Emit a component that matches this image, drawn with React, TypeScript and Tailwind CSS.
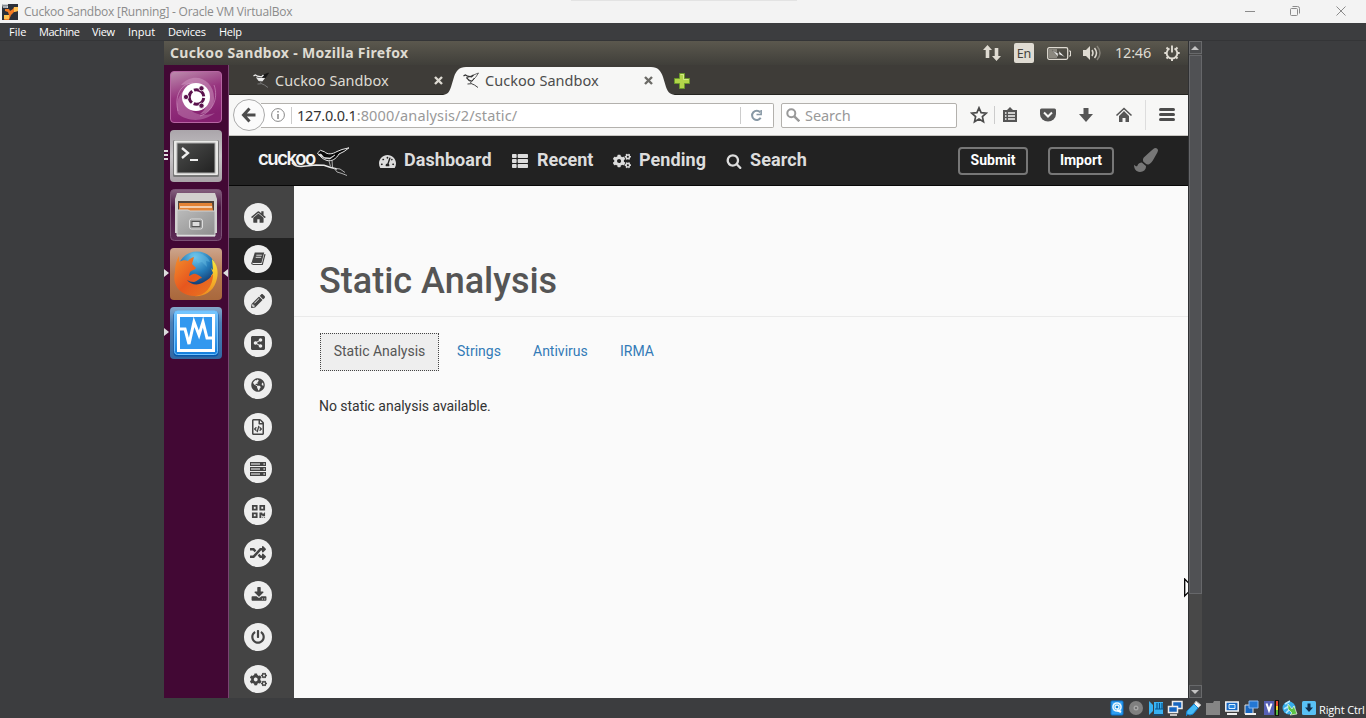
import React from 'react';
import {
  FaCogs, FaGlobeAmericas, FaPaintBrush, FaPencilAlt, FaPowerOff, FaQrcode,
  FaRandom, FaRegFileCode, FaShareAltSquare, FaTachometerAlt, FaThList,
} from 'react-icons/fa';

const HOME = 'M1408 992v480q0 26-19 45t-45 19h-384v-384h-256v384h-384q-26 0-45-19t-19-45v-480q0-1 .5-3t.5-3l575-474 575 474q1 2 1 6zm223-69l-62 74q-8 9-21 11h-3q-13 0-21-7l-692-577-692 577q-12 8-24 7-13-2-21-11l-62-74q-8-10-7-23.5t11-21.5l719-599q32-26 76-26t76 26l244 204v-195q0-14 9-23t23-9h192q14 0 23 9t9 23v408l219 182q10 8 11 21.5t-7 23.5z';
const SEARCH = 'M1216 832q0-185-131.5-316.5t-316.5-131.5-316.5 131.5-131.5 316.5 131.5 316.5 316.5 131.5 316.5-131.5 131.5-316.5zm512 832q0 52-38 90t-90 38q-54 0-90-38l-343-342q-179 124-399 124-143 0-273.5-55.5t-225-150-150-225-55.5-273.5 55.5-273.5 150-225 225-150 273.5-55.5 273.5 55.5 225 150 150 225 55.5 273.5q0 220-124 399l343 343q37 37 37 90z';
const DOWNLOAD = 'M1344 1344q0-26-19-45t-45-19-45 19-19 45 19 45 45 19 45-19 19-45zm256 0q0-26-19-45t-45-19-45 19-19 45 19 45 45 19 45-19 19-45zm128-224v320q0 40-28 68t-68 28h-1472q-40 0-68-28t-28-68v-320q0-40 28-68t68-28h465l135 136q58 56 136 56t136-56l136-136h464q40 0 68 28t28 68zm-325-569q17 41-14 70l-448 448q-18 19-45 19t-45-19l-448-448q-31-29-14-70 17-39 59-39h256v-448q0-26 19-45t45-19h256q26 0 45 19t19 45v448h256q42 0 59 39z';

function Glyph({ d, className }: { d: string; className?: string }) {
  return <svg viewBox="0 0 1792 1792" fill="currentColor" className={className}><path d={d} /></svg>;
}

function Bird({ light }: { light?: boolean }) {
  const c = light ? '#333' : '#eee';
  return (
    <svg viewBox="0 0 16 16" className="h-4 w-4 shrink-0" fill="none">
      <path d="m3.500 6 5 3.500 4-4L15.500 1l-5 2Z" fill={light ? '#f7f7f6' : '#161616'} stroke={light ? '#444' : '#161616'} strokeWidth=".8" />
      <path d="M.5 3.800 2.500 3l2 1.200 4 .6L10.500 3" stroke={c} strokeWidth="1.300" />
      <path d="m3.500 5.500 2.500 3 3 .5 2.500-3" fill={light ? 'none' : '#eee'} stroke={c} strokeWidth="1.100" />
      <path d="m7 9.500 1.500 2M4.500 12l4-.3 3 1.300 3.500 2.500" stroke={light ? '#444' : '#777'} strokeWidth="1" />
    </svg>
  );
}

function CuckooLogo() {
  return (
    <div className="relative flex h-[49px] w-[92px] shrink-0 items-start pt-[10px]">
      <span className="font-['Inter',sans-serif] text-[18.500px] leading-[24px] font-semibold tracking-[-1.450px] text-[#f4f4f4]">cuckoo</span>
      <svg viewBox="0 0 92 32" className="absolute top-[10px] left-0 h-8 w-[92px]" fill="none" stroke="#e8e8e8">
        <path d="M34 16.500c2 3 5 4 9 4l15-1.500 8 .300 6 2 7 1.700" strokeWidth="1.500" />
        <path d="M59.500 7l3-2.700 4 1.500c3 3 8 2.500 12.500-.300L84 3.500l7-1.700-5 3.700-5 2.500c-3 5-7 7.500-12 6.500-4-1-6.500-4-8.500-6Z" fill="#080808" strokeWidth="1" />
        <path d="m60 8.500 3-.5 3 3.500 6 .5 5-3-5 4-5-.5Z" fill="#e8e8e8" strokeWidth=".6" />
        <path d="m71 15 1.500 5.500M74 14l.5 7M78 22.500l4 .5 5 3.500M76 22l3 4 5 1.500 5 2" strokeWidth=".9" stroke="#bbb" />
      </svg>
    </div>
  );
}

function BookIcon() {
  return (
    <svg viewBox="0 0 16 16" className="h-4 w-4">
      <path d="M4.800 1.500h9.400L11.400 12H3.200Q1.500 12 2 10.300Z" fill="#444" />
      <path d="M15 3.200 12.300 13.500H3.200Q1.600 13.400 1.500 11.500" fill="none" stroke="#444" strokeWidth="1.200" />
      <path d="M6.300 4.200h5.500M5.700 6.300h5.500" stroke="#eee" strokeWidth=".9" />
    </svg>
  );
}

function ServerIcon() {
  return (
    <svg viewBox="0 0 16 14" className="h-[14px] w-4">
      {[0, 5, 10].map((y) => (
        <g key={y}>
          <rect y={y} width="16" height="4" fill="#444" />
          <rect x="1" y={y + 1.300} width="9" height="1.400" fill="#c4c4c4" />
          <rect x="13.500" y={y + 1.300} width="1.300" height="1.400" fill="#eee" />
        </g>
      ))}
    </svg>
  );
}

const sidebar: React.ReactNode[] = [
  <Glyph d={HOME} className="ml-px h-4 w-4" />,
  <BookIcon />,
  <FaPencilAlt className="h-[14px] w-[14px]" />,
  <FaShareAltSquare className="h-4 w-4" />,
  <FaGlobeAmericas className="h-[14px] w-[14px]" />,
  <FaRegFileCode className="h-4 w-4" />,
  <ServerIcon />,
  <FaQrcode className="h-[15px] w-[15px]" />,
  <FaRandom className="h-4 w-4" />,
  <Glyph d={DOWNLOAD} className="ml-px h-4 w-4" />,
  <FaPowerOff className="h-[14px] w-[14px]" />,
  <FaCogs className="ml-px h-[17px] w-[17px]" />,
];

function UbuntuIcon() {
  return (
    <svg viewBox="0 0 52 52" className="h-[52px] w-[52px]">
      <defs>
        <linearGradient id="ub" x1="0" y1="0" x2="0.300" y2="1"><stop stopColor="#bd8dae" /><stop offset=".5" stopColor="#97357f" /><stop offset="1" stopColor="#852070" /></linearGradient>
      </defs>
      <rect x=".5" y=".5" width="51" height="51" rx="3.500" fill="url(#ub)" stroke="#b765a3" />
      <path d="M11 14C24-1 45 9 44 28c0 9-7 15-14 15 10-7 12-24-3-29-6-2-12 0-16 0Z" fill="#d9a9cd" opacity=".45" />
      <path d="M8 43C3 24 18 12 31 17 18 15 11 26 18 36c6 9 18 9 27 6-13 10-28 8-37 1Z" fill="#d9a9cd" opacity=".35" />
      <path d="M8 40c-4-15 3-28 15-28M44 14c5 14-2 27-14 31" fill="none" stroke="#d29ac5" opacity=".6" />
      <circle cx="26" cy="26" r="14" fill="#fff" />
      <circle cx="26.500" cy="26" r="7.300" fill="none" stroke="#5b124d" strokeWidth="3" strokeDasharray="13.300 2" strokeDashoffset="-1" />
      <g fill="#5b124d" stroke="#fff" strokeWidth=".8"><circle cx="16" cy="26" r="2.600" /><circle cx="31.500" cy="17.300" r="2.600" /><circle cx="31.500" cy="34.700" r="2.600" /></g>
    </svg>
  );
}

function TerminalIcon() {
  return (
    <svg viewBox="0 0 52 52" className="h-[52px] w-[52px]">
      <defs>
        <linearGradient id="tb" x1="0" y1="0" x2="0" y2="1"><stop stopColor="#aaa5aa" /><stop offset=".5" stopColor="#c8c5c8" /><stop offset="1" stopColor="#a9a3a8" /></linearGradient>
        <linearGradient id="ts" x1="0" y1="0" x2="1" y2="1"><stop stopColor="#4c4d4c" /><stop offset="1" stopColor="#222" /></linearGradient>
      </defs>
      <rect width="52" height="52" rx="4" fill="url(#tb)" />
      <rect x="3" y="10" width="46" height="37" rx="1.500" fill="#797979" />
      <rect x="4" y="10.500" width="44" height="34.500" rx="1" fill="#e9e9e7" />
      <rect x="6.500" y="12.500" width="39" height="31" fill="#aaa" />
      <rect x="7.500" y="13.500" width="37" height="29" fill="url(#ts)" />
      <path d="m12 18 6 5-6 5" fill="none" stroke="#eee" strokeWidth="2.300" />
      <path d="M20 30h8" stroke="#eee" strokeWidth="2" />
    </svg>
  );
}

function FilesIcon() {
  return (
    <svg viewBox="0 0 52 52" className="h-[52px] w-[52px]">
      <defs>
        <linearGradient id="fb" x1="0" y1="0" x2="0" y2="1"><stop stopColor="#85617f" /><stop offset=".35" stopColor="#4b1743" /><stop offset="1" stopColor="#5d2b56" /></linearGradient>
        <linearGradient id="fc" x1="0" y1="0" x2="1" y2="1"><stop stopColor="#bbb" /><stop offset="1" stopColor="#8d8d8d" /></linearGradient>
      </defs>
      <rect x=".5" y=".5" width="51" height="51" rx="4" fill="url(#fb)" stroke="#7b5275" />
      <path d="M7 4h38l2 6v34H5V10Z" fill="#d2d0ce" />
      <path d="M8 12h36v10H8Z" fill="#51433b" />
      <path d="M9 14h33l1 8H9Z" fill="#e38235" />
      <path d="M10 18h32" stroke="#fff" strokeWidth="1.200" />
      <path d="M7 21h11l2 1h25v25H7Z" fill="url(#fc)" stroke="#d2d2d2" />
      <path d="M7 46.500h38" stroke="#dedede" strokeWidth="1.500" />
      <rect x="19.500" y="30" width="13" height="10" rx="2" fill="#999" stroke="#ddd" />
      <rect x="22" y="32.500" width="8" height="5" fill="#ddd" stroke="#555" />
    </svg>
  );
}

function FirefoxIcon() {
  return (
    <svg viewBox="0 0 52 52" className="h-[52px] w-[52px]">
      <defs>
        <linearGradient id="xb" x1="0" y1="0" x2="0" y2="1"><stop stopColor="#cda58c" /><stop offset=".5" stopColor="#b77950" /><stop offset="1" stopColor="#a9683c" /></linearGradient>
        <radialGradient id="xg" cx=".45" cy=".15" r=".8"><stop stopColor="#72c9ee" /><stop offset=".5" stopColor="#247bb8" /><stop offset="1" stopColor="#10275c" /></radialGradient>
        <linearGradient id="xf" x1="0" y1="0" x2="1" y2="1"><stop stopColor="#f38f2c" /><stop offset=".5" stopColor="#e7571e" /><stop offset="1" stopColor="#e87822" /></linearGradient>
        <linearGradient id="xy" x1="0" y1="0" x2="0" y2="1"><stop stopColor="#f9e83b" /><stop offset="1" stopColor="#ef8b1f" /></linearGradient>
      </defs>
      <rect width="52" height="52" rx="4" fill="url(#xb)" />
      <circle cx="27" cy="23" r="19.500" fill="url(#xg)" />
      <path d="M22 5c8-1 16 3 18 9l-4-1 1 6-5-5-4 1-3-5-6-2Z" fill="#6cc0e6" opacity=".4" />
      <path d="M42 11c6 6 7 15 4 23-4 11-13 15-23 14 11-3 18-9 18-20l2-3-2-5 2 2Z" fill="url(#xy)" />
      <path d="M9 8v6c3-2 7-2 9-1 1-2 3-3 6-4l-2 7 4 4c-1 2-4 2-6 4l-1 4c3-1 4-3 7-2 2 1 5 2 6 4-3 0-4 3-8 4-3 0-5-1-7-2 4 5 11 6 17 2 4-2 7-5 9-8 0 13-8 22-19 22C9 47 2 36 5 24c0-6 1-11 4-16Z" fill="url(#xf)" />
    </svg>
  );
}

function MonitorIcon() {
  return (
    <svg viewBox="0 0 52 52" className="h-[52px] w-[52px]">
      <defs>
        <linearGradient id="mb" x1="0" y1="0" x2="0" y2="1"><stop stopColor="#86a8cb" /><stop offset=".3" stopColor="#4c7fb5" /><stop offset="1" stopColor="#3169a4" /></linearGradient>
        <linearGradient id="mc" x1="0" y1="0" x2="0" y2="1"><stop stopColor="#78c8ff" /><stop offset="1" stopColor="#147fdd" /></linearGradient>
      </defs>
      <rect width="52" height="52" rx="4" fill="url(#mb)" />
      <rect x="3.500" y="4.500" width="45" height="45" rx="4" fill="#0757aa" />
      <rect x="4.500" y="4" width="43" height="43.500" rx="3" fill="url(#mc)" stroke="#70c2ff" />
      <rect x="8.500" y="8.500" width="35" height="35" fill="#3298ef" stroke="#fff" strokeWidth="3" />
      <path d="M9 22h6l4 15 5-22 5 13 4-13 4 16h6" fill="none" stroke="#fff" strokeWidth="3" />
    </svg>
  );
}

function TrayIcons() {
  return (
    <div className="flex h-full items-center gap-[3.200px]">
      <svg viewBox="0 0 16 16" className="h-4 w-4"><rect x="2" y="1" width="12" height="14" rx="1" fill="#2f9df0" stroke="#0872ce" /><circle cx="8" cy="7" r="4.800" fill="#eaf7ff" /><circle cx="8" cy="7" r="3" fill="none" stroke="#7dc5f4" /><circle cx="8" cy="7" r="1.300" fill="#1687dc" /><path d="m12 12-4-2" stroke="#fff" strokeWidth="2" /></svg>
      <svg viewBox="0 0 16 16" className="h-4 w-4"><circle cx="8" cy="8" r="7" fill="#808080" /><circle cx="8" cy="8" r="2.500" fill="#a5a5a5" /><circle cx="8" cy="8" r=".8" fill="#333" /></svg>
      <svg viewBox="0 0 16 16" className="h-4 w-4"><path d="M1 1v14l4-4V5ZM6 2h9v12H6Z" fill="#38b2f3" /><path d="M9 3v6M11.500 3v6M14 3v6M7 9h9M5 15h11" stroke="#07538b" strokeWidth="1.200" /></svg>
      <svg viewBox="0 0 16 16" className="h-4 w-4"><path d="M5.500 1.500h9.500v7H5.500Z" fill="#1766c0" stroke="#eee" strokeWidth="1.500" /><path d="M1.500 6.500h9v6h-9Z" fill="#1766c0" stroke="#eee" strokeWidth="1.500" /><path d="M3 15h7" stroke="#eee" strokeWidth="1.500" /></svg>
      <svg viewBox="0 0 16 16" className="h-4 w-4"><path d="m10 1 5 4-3 3-4-4Z" fill="#f3f3f3" stroke="#aaa" /><path d="m8 4 4 4-5 6-3 1-3-1-1 2 1-5Z" fill="#45baf6" stroke="#1684d2" /></svg>
      <svg viewBox="0 0 16 16" className="h-4 w-4"><path d="M1 3h7l1-2h6v14H1Z" fill="#858585" /></svg>
      <svg viewBox="0 0 16 16" className="h-4 w-4"><path d="M1.800 2h12.400v9H1.800Z" fill="#1766c0" stroke="#f4f4f4" strokeWidth="1.500" /><path d="M5 4.500h6v4H5Z" fill="#2785df" stroke="#d9f0ff" /><path d="M3 14h10" stroke="#eee" strokeWidth="2" /></svg>
      <svg viewBox="0 0 16 16" className="h-4 w-4"><path d="M2 5h8v9H2Z" fill="#1766c0" stroke="#ddd" /><path d="M6 1h9v7H6Z" fill="#2377d4" stroke="#87b6ee" /><path d="M2 14h11" stroke="#eee" strokeWidth="2" /></svg>
      <svg viewBox="0 0 16 16" className="h-4 w-4"><path d="M1 1h10v14H1Z" fill="#5760b5" /><path d="m3.500 3.500 2.500 7 2.500-7" fill="none" stroke="#fff" strokeWidth="2" /><path d="M12 0h4v16h-4Z" fill="#111" /><path d="M13 1h2v5h-2Z" fill="#ed4a32" /><path d="M13 6h2v4h-2Z" fill="#f2d32d" /><path d="M13 10h2v5h-2Z" fill="#54b63c" /></svg>
      <svg viewBox="0 0 16 16" className="h-4 w-4"><circle cx="7" cy="8" r="6.500" fill="#38aeea" /><path d="M3 4l5-3M2 9l5-3M4 13l4-4" stroke="#b7e8ff" strokeWidth="1.500" /><path d="m6 4 4 5 2-3 3 8-7 1 2-2-4-4Z" fill="#5ac447" stroke="#edf8e8" strokeWidth=".7" /></svg>
      <svg viewBox="0 0 16 16" className="h-4 w-4"><rect x="1" y="1" width="14" height="14" rx="1.500" fill="#59c1f5" /><path d="M6.500 3.500h3v4H12l-4 4.500-4-4.500h2.500Z" fill="#102c49" /></svg>
    </div>
  );
}

function Tab({ active }: { active?: boolean }) {
  return (
    <div className={active
      ? 'relative flex h-[30px] w-[210px] items-start pt-[5px] pl-[9px] text-[#4c4c4c]'
      : 'relative flex h-[30px] w-[210px] items-start pt-[5px] pl-[9px] text-[#dedbd3]'}>
      {active && (
        <svg viewBox="0 0 236 28" className="absolute top-[2px] left-[-13px] h-7 w-[236px]"><path d="M0 28c6 0 8-2 10-8l3-10C15 4 18 0 25 0h185c7 0 10 4 12 10l3 10c2 6 5 8 11 8Z" fill="#f7f7f6" /></svg>
      )}
      <div className="relative flex w-full items-center">
        <Bird light={active} />
        <span className="ml-[6px] w-[159px] text-[14.500px] leading-5 tracking-[0.040px]">Cuckoo Sandbox</span>
        <svg viewBox="0 0 9 9" className={active ? 'h-[9px] w-[9px] text-[#6c6b67]' : 'h-[9px] w-[9px]'} fill="none" stroke="currentColor" strokeWidth="2.400"><path d="m1 1 7 7M8 1 1 8" /></svg>
      </div>
    </div>
  );
}

export default function App() {
  return (
    <div className="flex h-[718px] w-[1366px] flex-col overflow-hidden bg-[#3c3d3f] font-['Noto_Sans','Open_Sans',sans-serif]">
      <header className="relative flex h-[23px] shrink-0 items-center bg-[#f3f3f3] pl-[2px]">
        <div className="absolute top-0 left-[571px] h-px w-[226px] bg-[#e3e3e3]" />
        <svg viewBox="0 0 16 16" className="h-4 w-4">
          <path d="M0 0h16v16H0Z" fill="#2c3039" />
          <path d="M3 5h4l1 2 3-2 1-2h4v4l-4 1-3 3-2 5H2l2-5h3L6 8 3 7Z" fill="#f47b24" />
          <path d="M12 3h4v4l-4 1ZM2 11h5v4H2Z" fill="#ffc251" /><path d="M0 0h6v4H1Z" fill="#cdd0d3" /><path d="M1 1.500h5M1 3h4" stroke="#6a7078" strokeWidth=".7" />
        </svg>
        <span className="ml-[6px] flex-1 font-['Open_Sans',sans-serif] text-[12px] leading-4 tracking-[-0.230px] text-[#8b8b8b]">Cuckoo Sandbox [Running] - Oracle VM VirtualBox</span>
        <svg viewBox="0 0 106 14" className="mr-[17px] -mt-[2px] h-[14px] w-[106px]" fill="none" stroke="#8b8b8b">
          <path d="M2 7.500h10M93.500 2.500l9 9M102.500 2.500l-9 9" />
          <rect x="47.500" y="4.500" width="7" height="7" rx="1" /><path d="M49.500 2.500h5q2 0 2 2v5" />
        </svg>
      </header>
      <nav className="flex h-[18px] shrink-0 items-center border-b border-[#343537] pl-[9px] font-['Open_Sans',sans-serif] text-[11px] leading-4 text-white">
        <span className="w-[30px]">File</span><span className="w-[53px] tracking-[-0.450px]">Machine</span><span className="w-[36px] tracking-[-0.300px]">View</span><span className="w-[40px]">Input</span><span className="w-[51px] tracking-[-0.200px]">Devices</span><span className="tracking-[-0.300px]">Help</span>
      </nav>

      <main className="flex h-[657px] shrink-0 pl-[164px]">
        <div className="relative flex w-[1024px] flex-col overflow-hidden">
          <div className="flex h-6 shrink-0 items-center bg-linear-to-b from-[#5b584e] to-[#403f3a] pr-[8px] pl-[6px] text-[#dfdbd2]">
            <span className="flex-1 text-[14px] leading-6 font-bold tracking-[0.330px]">Cuckoo Sandbox - Mozilla Firefox</span>
            <svg viewBox="0 0 18 18" className="mr-[13px] h-[18px] w-[18px]" fill="currentColor"><path d="M0 6l4.500-5L9 6H6.300v8H2.700V6ZM9 12h2.700V4h3.600v8H18l-4.500 5Z" /></svg>
            <span className="mr-[13px] flex h-5 w-5 items-center justify-center rounded-xs bg-[#dfdbd2] text-[12.500px] text-[#43423c]"><span className="pt-0.5">En</span></span>
            <svg viewBox="0 0 24 13" className="mr-[12px] h-[13px] w-6"><rect x=".7" y=".7" width="20" height="11.600" rx="1.500" fill="none" stroke="#dfdbd2" strokeWidth="1.300" /><path d="M22 4h1.500v5H22" fill="none" stroke="#dfdbd2" /><path d="M2 2h8v9H2Z" fill="#8b887f" /><path d="m5 3 7 4V4l6 6-7-3v3Z" fill="#eee" stroke="#55524b" strokeWidth=".5" /></svg>
            <svg viewBox="0 0 20 16" className="mr-[12px] h-4 w-5" fill="none" stroke="#dfdbd2" strokeWidth="1.500"><path d="M0 5h3l4-4v14l-4-4H0Z" fill="#dfdbd2" stroke="none" /><path d="M9 5q2 3 0 6M11.500 3q4 5 0 10" /><path d="M14 1q6 7 0 14" stroke="#858178" /></svg>
            <span className="w-[49px] pb-px text-[14.500px] leading-[23px] tracking-[-0.200px]">12:46</span>
            <svg viewBox="0 0 16 16" className="h-4 w-4" fill="none" stroke="currentColor"><path d="M5.500 3.500a5.300 5.300 0 1 0 5 0M8 .5v7" strokeWidth="1.900" /><path d="M.3 8H3M13 8h2.700M2.500 2.500l2 2M13.500 2.500l-2 2M2.500 13.500l2-2M13.500 13.500l-2-2M8 13v3" strokeWidth="2" /></svg>
          </div>

          <div className="flex h-[633px]">
            <aside className="flex w-[65px] shrink-0 flex-col gap-[7px] border-r border-[#794571] bg-[#420834] pt-[6px] pl-[6px]">
              <UbuntuIcon />
              <div className="relative"><TerminalIcon /><div className="absolute top-[20px] left-[-6px] flex flex-col gap-[2px]"><i className="h-[2px] w-1 bg-[#ddd]" /><i className="h-[2px] w-1 bg-[#ddd]" /><i className="h-[2px] w-1 bg-[#ddd]" /></div></div>
              <FilesIcon />
              <div className="relative h-[52px]"><FirefoxIcon />
                <svg viewBox="0 0 64 8" className="absolute top-[21px] left-[-6px] h-2 w-16" fill="#ddd"><path d="m0 0 5 4-5 4ZM64 0l-5 4 5 4Z" /></svg>
              </div>
              <div className="relative h-[52px]"><MonitorIcon />
                <svg viewBox="0 0 5 8" className="absolute top-[21px] left-[-6px] h-2 w-[5px]" fill="#ddd"><path d="m0 0 5 4-5 4Z" /></svg>
              </div>
            </aside>

            <section className="flex flex-1 flex-col">
              <div className="flex h-[30px] shrink-0 border-b border-[#242420] bg-[#3e3c38] pl-[15px]">
                <Tab /><Tab active />
                <svg viewBox="0 0 16 16" className="mt-[8px] ml-[10px] h-4 w-4"><path d="M5.500.5h5v5h5v5h-5v5h-5v-5h-5v-5h5Z" fill="#b2d64a" stroke="#6b982c" /><path d="M6.500 1.500h3v5h5" fill="none" stroke="#d4eb87" /></svg>
              </div>

              <div className="flex h-[41px] shrink-0 items-center border-b border-[#c7c5c1] bg-[#f7f7f6] pl-1 text-[14.500px] text-[#999]">
                <div className="relative z-10 flex h-8 w-8 shrink-0 items-center justify-center rounded-full border border-[#aaa] bg-[#fbfbfb]">
                  <svg viewBox="0 0 16 16" className="h-4 w-4" fill="none" stroke="#4c4c4c" strokeWidth="3"><path d="M8.500 1.500 2.500 8l6 6.500M3 8h11.500" /></svg>
                </div>
                <div className="-ml-1 flex h-[25px] w-[513px] shrink-0 items-center rounded-r-xs border border-l-0 border-[#b3b1ad] bg-white pl-[10px]">
                  <svg viewBox="0 0 14 14" className="h-[14px] w-[14px]" fill="none" stroke="#888"><circle cx="7" cy="7" r="6.400" /><path d="M7 6v5M7 3v1.600" strokeWidth="1.500" /></svg>
                  <span className="ml-[6px] h-[17px] w-px bg-[#ccc]" />
                  <span className="ml-[5px] flex-1 leading-5"><span className="tracking-[-0.200px] text-[#333]">127.0.0.1</span><span className="tracking-[0.150px]">:8000/analysis/2/static/</span></span>
                  <span className="h-[17px] w-px bg-[#ccc]" />
                  <svg viewBox="0 0 14 14" className="mr-[10px] ml-[9px] h-[13px] w-[13px]" fill="none" stroke="#8798a5" strokeWidth="2.200"><path d="M11.500 9.500A5 5 0 1 1 11 3.500" /><path d="M12 1v5H7" strokeWidth="1.700" /></svg>
                </div>
                <div className="ml-[7px] flex h-[25px] w-[176px] shrink-0 items-center rounded-xs border border-[#b3b1ad] bg-white pl-1">
                  <svg viewBox="0 0 14 14" className="h-[14px] w-[14px]" fill="none" stroke="#999" strokeWidth="2"><circle cx="5.300" cy="5.300" r="4" /><path d="m8.300 8.300 5 5" strokeWidth="2.400" /></svg>
                  <span className="ml-[5px] leading-5 tracking-[-0.050px]">Search</span>
                </div>
                <svg viewBox="0 0 18 18" className="ml-[13px] h-[18px] w-[18px]"><path d="m9 1.800 2.100 4.800 5.200.5-3.900 3.500 1.100 5.100L9 13.100l-4.500 2.600 1.100-5.100-3.900-3.500 5.200-.5Z" fill="none" stroke="#4c4c4c" strokeWidth="1.700" /></svg>
                <span className="ml-[6px] h-[18px] w-px bg-[#ccc]" />
                <svg viewBox="0 0 16 16" className="ml-[7px] h-4 w-4"><path d="M1 3h4l3-3 3 3h4v12H1Z" fill="#555" /><path d="M3 6h1.500m1.500 0h7M3 9h1.500m1.500 0h7M3 12h1.500m1.500 0h7" stroke="#f7f7f6" strokeWidth="1.500" /></svg>
                <svg viewBox="0 0 18 16" className="ml-[21px] h-4 w-[18px]"><path d="M2.500 1.500h13q1.500 0 1.500 1.500v4a8 7.500 0 0 1-16 0V3q0-1.500 1.500-1.500Z" fill="#555" /><path d="m5 5.500 4 4 4-4" fill="none" stroke="#f7f7f6" strokeWidth="2" /></svg>
                <svg viewBox="0 0 16 16" className="ml-[21px] h-4 w-4" fill="#555"><path d="M5.500 1h5v6h4.500L8 15 1 7h4.500Z" /></svg>
                <svg viewBox="0 0 18 16" className="ml-[21px] h-4 w-[18px]"><path d="m1.500 8.500 7.500-7 7.500 7" fill="none" stroke="#555" strokeWidth="1.600" /><path d="m4 9 5-5 5 5v6h-3.500v-4h-3v4H4Z" fill="#555" /></svg>
                <span className="ml-[12px] h-[30px] w-px bg-[#ddd]" />
                <span className="ml-[13px] flex flex-col gap-[2px] pb-px"><i className="h-[3px] w-4 rounded-full bg-[#4c4c4c]" /><i className="h-[3px] w-4 rounded-full bg-[#4c4c4c]" /><i className="h-[3px] w-4 rounded-full bg-[#4c4c4c]" /></span>
              </div>

              <div className="flex h-[50px] shrink-0 items-center border-b border-[#080808] bg-[#222] pl-[29px] font-['Roboto',sans-serif] text-[18px] font-bold text-[#ddd]">
                <CuckooLogo />
                <div className="ml-[29px] flex w-[133px] items-center gap-[8px]"><FaTachometerAlt className="mt-px h-[17px] w-[17px] shrink-0" /><span className="pb-[2px] tracking-[0.060px]">Dashboard</span></div>
                <div className="flex w-[101px] items-center gap-[9px]"><FaThList className="h-[16px] w-[16px] shrink-0" /><span className="pb-[2px] tracking-[-0.050px]">Recent</span></div>
                <div className="flex w-[113px] items-center gap-[8px]"><FaCogs className="h-[18px] w-[18px] shrink-0" /><span className="pb-[2px] tracking-[0.080px]">Pending</span></div>
                <div className="flex items-center gap-[8px]"><Glyph d={SEARCH} className="h-4 w-4" /><span className="pb-[2px] tracking-[0.080px]">Search</span></div>
                <div className="mr-[30px] ml-auto flex items-center">
                  <span className="mr-5 flex h-7 w-[70px] items-center justify-center rounded-[4px] border-2 border-[#777] pb-px text-[14px] leading-5 font-bold text-white">Submit</span>
                  <span className="mr-5 flex h-7 w-[66px] items-center justify-center rounded-[4px] border-2 border-[#777] pb-px text-[14px] leading-5 font-bold text-white">Import</span>
                  <FaPaintBrush className="-mt-[2px] h-6 w-6 text-[#777]" />
                </div>
              </div>

              <div className="flex h-[512px] overflow-hidden">
                <aside className="flex w-[65px] shrink-0 flex-col bg-[#444] pt-[10px]">
                  {sidebar.map((icon, i) => (
                    <div key={i} className={i === 1 ? 'flex h-[42px] shrink-0 bg-[#222] pt-[7px] pl-[15px]' : 'flex h-[42px] shrink-0 pt-[7px] pl-[15px]'}>
                      <div className="flex h-7 w-7 items-center justify-center rounded-full bg-[#eee] text-[#444]">{icon}</div>
                    </div>
                  ))}
                </aside>
                <article className="flex-1 bg-[#fafafa] font-['Roboto',sans-serif] text-[14px] text-[#333]">
                  <div className="h-[131px] border-b border-[#eaeaea] pt-[73px] pl-[25px]">
                    <h1 className="text-[36px] leading-[44px] font-medium text-[#555]">Static Analysis</h1>
                  </div>
                  <div className="mt-4 ml-[26px] flex h-[38px] items-center text-[#337ab7]">
                    <span className="flex h-[38px] w-[119px] items-center justify-center border border-dotted border-[#444] bg-[#eee] pb-0.5 text-[#555]">Static Analysis</span>
                    <span className="ml-[18px] w-[76px] pb-0.5">Strings</span><span className="w-[87px] pb-0.5">Antivirus</span><span className="pb-0.5">IRMA</span>
                  </div>
                  <p className="mt-[25px] ml-[25px] leading-5 tracking-[-0.030px]">No static analysis available.</p>
                </article>
              </div>
            </section>
          </div>
          <svg viewBox="0 0 12 20" className="absolute top-[537px] left-[1020px] h-5 w-3"><path d="M.7 1v17l4-4 3 5 3-2-3-5h4Z" fill="#fff" stroke="#000" strokeWidth="1.300" /></svg>
        </div>
        <div className="flex w-[14px] flex-col border-l border-[#303133] bg-[#484848]">
          <div className="flex h-[13px] items-center justify-center border border-[#68696b] bg-[#4a4b4d] pr-px"><svg viewBox="0 0 8 4" className="h-1 w-2" fill="#c3c3c3"><path d="m4 0 4 4H0Z" /></svg></div>
          <div className="mt-px h-[539px] border border-[#66676a] bg-[#505154]" />
          <div className="mt-auto flex h-[13px] items-center justify-center border border-[#68696b] bg-[#4a4b4d] pr-px"><svg viewBox="0 0 8 4" className="h-1 w-2" fill="#c3c3c3"><path d="M0 0h8L4 4Z" /></svg></div>
        </div>
      </main>
      <footer className="flex h-5 shrink-0 items-center justify-end pr-[1px] text-white">
        <TrayIcons />
        <span className="ml-[2px] w-[46px] pt-[3px] font-['Open_Sans',sans-serif] text-[11px] leading-4 tracking-[-0.150px] whitespace-nowrap">Right Ctrl</span>
      </footer>
    </div>
  );
}
